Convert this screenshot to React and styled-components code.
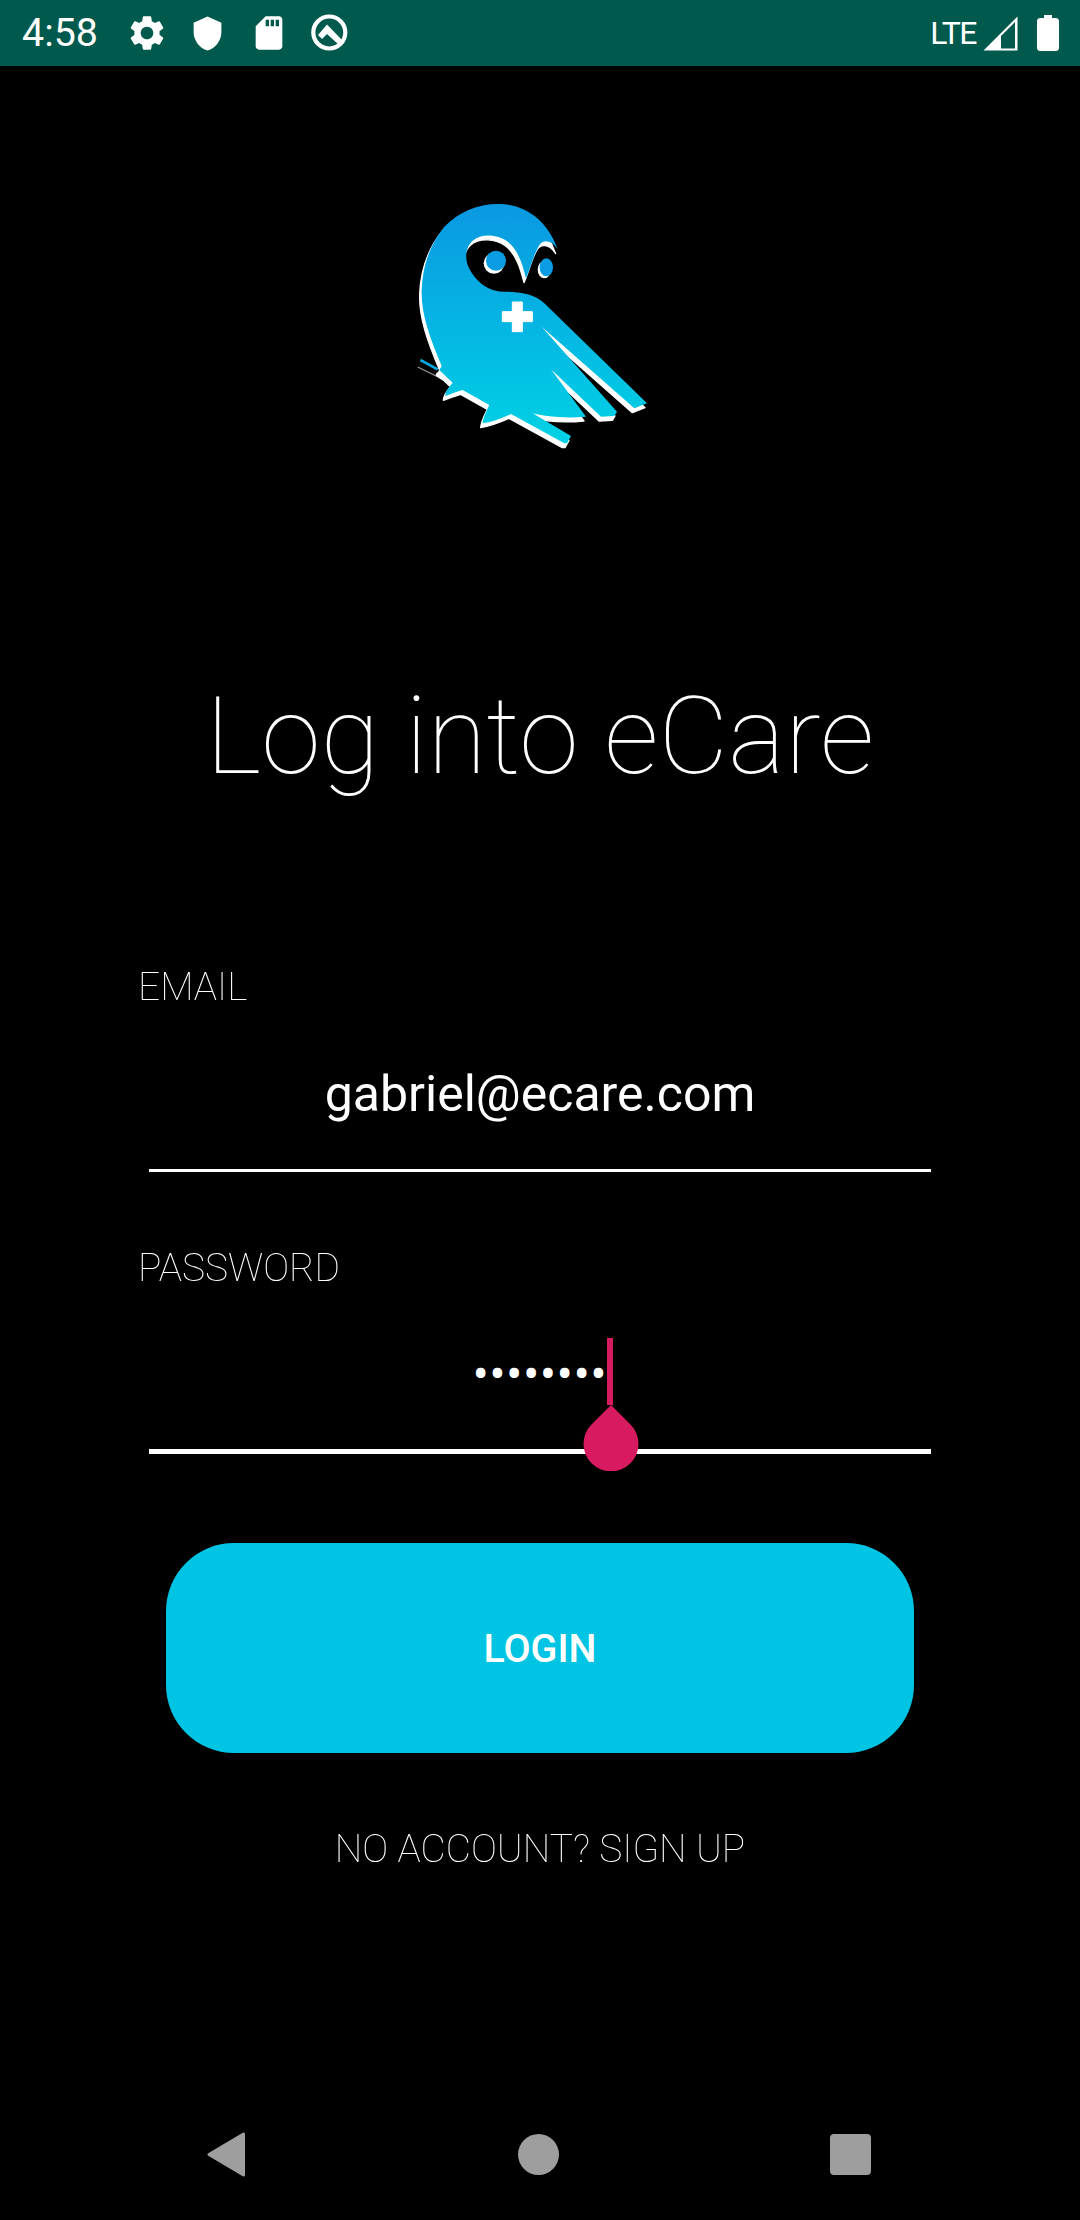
import React from 'react'
import styled, { createGlobalStyle, css } from 'styled-components'
import { MdSettings, MdSdStorage } from 'react-icons/md'

const GlobalStyle = createGlobalStyle`
  html, body {
    margin: 0;
    padding: 0;
    background: #000;
  }
  * {
    box-sizing: border-box;
  }
`

const App = () => {
  return (
    <>
      <GlobalStyle />
      <Page>
        <StatusBar>
          <Clock>4:58</Clock>
          <StatusSlot>
            <MdSettings size={42} />
          </StatusSlot>
          <StatusSlot>
            <svg width="37" height="37" viewBox="0 0 24 24" fill="#fff">
              <path d="M12 1L3 5v6c0 5.55 3.84 10.74 9 12 5.16-1.26 9-6.45 9-12V5l-9-4z" />
            </svg>
          </StatusSlot>
          <StatusSlot>
            <MdSdStorage size={40} />
          </StatusSlot>
          <StatusSlot>
            <svg width="40" height="40" viewBox="0 0 40 40" fill="none">
              <circle cx="19.3" cy="19.5" r="16" stroke="#fff" strokeWidth="4.2" />
              <path d="M17 11.5 L33 28 L29 32 L17 21 L12 26 L8 22 Z" fill="#fff" />
            </svg>
          </StatusSlot>
          <StatusRight>
            <NetworkLabel>LTE</NetworkLabel>
            <svg width="35" height="35" viewBox="0 0 35 35">
              <path d="M0.5 34.5 L34.5 0.5 V34.5 Z M18 32.5 H32 V6 L18 20 Z" fill="#fff" fillRule="evenodd" />
            </svg>
            <svg width="22" height="36" viewBox="0 0 22 36" fill="#fff">
              <path d="M7 0 H15 V3 H19 C20.6 3 22 4.4 22 6 V33 C22 34.6 20.6 36 19 36 H3 C1.4 36 0 34.6 0 33 V6 C0 4.4 1.4 3 3 3 H7 Z" />
            </svg>
          </StatusRight>
        </StatusBar>

        <LogoRow>
          <svg width="270" height="270" viewBox="0 0 810 810">
            <defs>
              <linearGradient id="owlFill" x1="0" y1="0" x2="0" y2="1">
                <stop offset="0" stopColor="#0a98e2" />
                <stop offset="1" stopColor="#00d2e4" />
              </linearGradient>
            </defs>
            <path d="M105 552 L155 582" stroke="#fff" strokeWidth="12" />
            <path d="M58 510 L110 538" stroke="#00a8e0" strokeWidth="8" />
            <path d="M50 531 L105 558" stroke="#999" strokeWidth="4" />
            <path d={OWL} fill="#fff" stroke="#fff" strokeWidth="4" strokeLinejoin="round" transform="translate(-6 13)" />
            <path d={OWL} fill="url(#owlFill)" />
            <path d="M334 336 H364 V365 H394 V395 H364 V425 H334 V395 H304 V365 H334 Z" fill="#fff" stroke="#fff" strokeWidth="3" strokeLinejoin="round" />
            <circle cx="279" cy="220" r="31" fill="#fff" />
            <circle cx="285" cy="212" r="30" fill="#0a9ce2" />
            <ellipse cx="430" cy="239" rx="20" ry="26" fill="#fff" />
            <ellipse cx="436" cy="232" rx="20" ry="27" fill="#0a9ce2" />
          </svg>
        </LogoRow>

        <Title>Log into eCare</Title>

        <FieldLabel>EMAIL</FieldLabel>
        <FieldValue>gabriel@ecare.com</FieldValue>
        <Underline />

        <FieldLabel $gap>PASSWORD</FieldLabel>
        <PasswordField>
          <FieldValue $dots>••••••••</FieldValue>
          <Underline $focused />
          <Caret />
          <CaretHandle width="56" height="66" viewBox="0 0 56 66">
            <path d="M28 0 L47.5 19.5 A27.5 27.5 0 1 1 8.5 19.5 Z" fill="#d81b60" />
          </CaretHandle>
        </PasswordField>

        <LoginButton>LOGIN</LoginButton>
        <SignUp>NO ACCOUNT? SIGN UP</SignUp>

        <NavBar>
          <NavSlot>
            <svg width="38" height="45" viewBox="0 0 38 45" fill="#9e9e9e" stroke="#9e9e9e" strokeWidth="3" strokeLinejoin="round">
              <path d="M2 22.5 L36.5 2 V43 Z" />
            </svg>
          </NavSlot>
          <NavSlot>
            <svg width="41" height="41" viewBox="0 0 41 41" fill="#9e9e9e">
              <circle cx="20.5" cy="20.5" r="20.5" />
            </svg>
          </NavSlot>
          <NavSlot>
            <svg width="41" height="41" viewBox="0 0 41 41" fill="#9e9e9e">
              <rect width="41" height="41" rx="4" />
            </svg>
          </NavSlot>
        </NavBar>
      </Page>
    </>
  )
}

// owl silhouette, traced in the 810 box of the logo crop
const OWL = `M290 42 C370 40 440 90 470 178 C452 150 425 145 412 170 C398 195 388 235 375 265
C365 225 352 180 320 155 C290 132 240 130 215 152 C190 175 190 215 210 245
C235 285 270 305 310 305 C350 305 400 310 430 340 L738 640 L700 655 L422 410
L648 665 L640 678 L600 680 L450 538 L555 680 C500 685 440 682 395 670 L510 738 L498 760 L490 760 L330 672
C300 685 275 695 245 700 C246 685 255 665 265 645 L185 600 C168 605 150 612 133 618
C134 600 145 590 155 578 L115 540 L122 528 C85 440 60 370 62 300 C65 220 90 160 130 110 C175 65 230 42 290 42 Z`

// grey antialiasing for the thin text, no colour fringes
const thinText = css`
  font-weight: 100;
  will-change: transform;
`

//STYLED COMPONENTS
const Page = styled.div`
  width: 1080px;
  height: 2220px;
  display: flex;
  flex-direction: column;
  background-color: #000;
  color: #fff;
  font-family: 'Roboto', sans-serif;
  overflow: hidden;
`

const StatusBar = styled.div`
  height: 66px;
  display: flex;
  align-items: center;
  padding-left: 22px;
  padding-right: 21px;
  background-color: #00594d;
  color: #fff;
  flex-shrink: 0;
`

const Clock = styled.span`
  width: 94px;
  font-size: 39.4px;
  line-height: 66px;
`

const StatusSlot = styled.div`
  width: 61px;
  height: 66px;
  display: flex;
  align-items: center;
  justify-content: center;
`

const StatusRight = styled.div`
  margin-left: auto;
  display: flex;
  align-items: center;
  gap: 19px;
`

const NetworkLabel = styled.span`
  font-size: 32px;
  line-height: 66px;
  letter-spacing: -1.5px;
  margin-right: -12px;
`

const LogoRow = styled.div`
  height: 394px;
  padding-top: 124px;
  padding-left: 401px;
  flex-shrink: 0;
`

const Title = styled.h1`
  ${thinText}
  margin: 216px 0 169px;
  font-size: 107.6px;
  line-height: 120px;
  text-align: center;
`

const FieldLabel = styled.label`
  ${thinText}
  display: block;
  margin-top: ${props => (props.$gap ? '74px' : '0')};
  padding-left: 138px;
  font-size: 38.9px;
  line-height: 44px;
`

const FieldValue = styled.div`
  padding: ${props => (props.$dots ? '57px 0 46px' : '57px 0 47px')};
  font-size: ${props => (props.$dots ? '47.25px' : '50px')};
  line-height: 56px;
  text-align: center;
  letter-spacing: ${props => (props.$dots ? '0.9px' : '0')};
`

const Underline = styled.div`
  height: ${props => (props.$focused ? '5px' : '3px')};
  margin: 0 149px;
  background-color: #fff;
`

const PasswordField = styled.div`
  position: relative;
`

const Caret = styled.div`
  position: absolute;
  left: 607px;
  top: 48px;
  width: 6px;
  height: 67px;
  background-color: #d81b60;
`

const CaretHandle = styled.svg`
  position: absolute;
  left: 583px;
  top: 115px;
`

const LoginButton = styled.button`
  display: block;
  width: 748px;
  height: 210px;
  margin: 89px 0 0 166px;
  padding: 0;
  border: none;
  border-radius: 68px;
  background-color: #00c4e3;
  color: #fff;
  font-family: 'Roboto', sans-serif;
  font-size: 39.4px;
  font-weight: 500;
`

const SignUp = styled.div`
  ${thinText}
  margin-top: 74px;
  font-size: 38.9px;
  line-height: 44px;
  text-align: center;
`

const NavBar = styled.div`
  margin-top: auto;
  height: 132px;
  display: flex;
  align-items: center;
  justify-content: space-between;
  padding: 0 200px 0 196px;
  flex-shrink: 0;
`

const NavSlot = styled.div`
  width: 60px;
  display: flex;
  justify-content: center;
`

export default App
